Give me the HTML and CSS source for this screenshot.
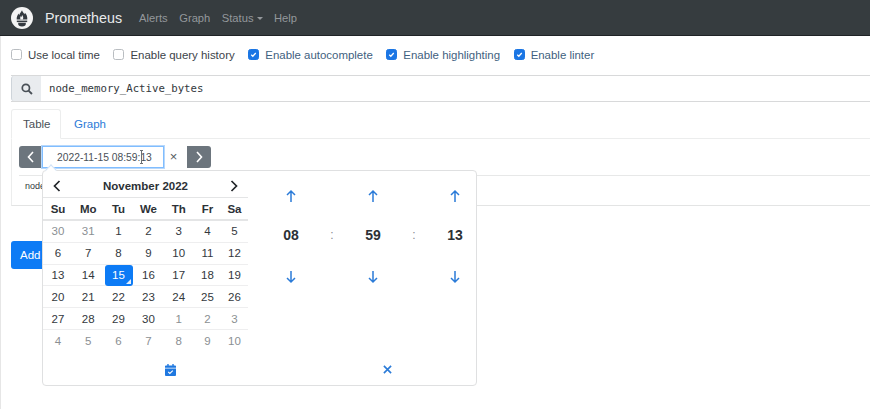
FILE: index.html
```html
<!DOCTYPE html>
<html lang="en">
<head>
<meta charset="utf-8">
<title>Prometheus</title>
<link rel="stylesheet" href="styles.css">
</head>
<body>
<nav class="navbar">
  <svg class="logo" viewBox="0 0 22 22" aria-hidden="true">
    <circle cx="11" cy="11" r="11" fill="#f4f4f4"/>
    <path d="M11 3.2c.5 2 2 2.6 2.2 4 .5-.4.7-1 .7-1.5 1.6 1.700 2.600 3.700 2.400 6.800H5.700c-.2-2.500.7-4.300 2-6 0 .7.200 1.200.7 1.500C8.500 6 10.300 5.200 11 3.200z" fill="#343a40"/>
    <path d="M9.500 12.600c-.5-1.500-.3-2.500.4-3.500.1.600.3.900.6 1.100.1-1 .3-1.700.7-2.300.2.900.8 1.400 1 2.100.1.800 0 1.700-.3 2.600z" fill="#f4f4f4"/>
    <rect x="5.800" y="13.600" width="10.400" height="1.500" fill="#343a40"/>
    <path d="M7.200 15.800h7.600v1.200a3.800 2.400 0 0 1-7.600 0z" fill="#343a40"/>
  </svg>
  <span class="brand">Prometheus</span>
  <a class="nav-link">Alerts</a>
  <a class="nav-link">Graph</a>
  <a class="nav-link">Status<i class="caret"></i></a>
  <a class="nav-link">Help</a>
</nav>
<main class="page">
  <div class="options">
    <label class="opt"><i class="box"></i>Use local time</label>
    <label class="opt"><i class="box"></i>Enable query history</label>
    <label class="opt on"><i class="box"><svg viewBox="0 0 12 12"><path d="M3 6.300l2.100 2L9 4" fill="none" stroke="#fff" stroke-width="1.700"/></svg></i>Enable autocomplete</label>
    <label class="opt on"><i class="box"><svg viewBox="0 0 12 12"><path d="M3 6.300l2.100 2L9 4" fill="none" stroke="#fff" stroke-width="1.700"/></svg></i>Enable highlighting</label>
    <label class="opt on"><i class="box"><svg viewBox="0 0 12 12"><path d="M3 6.300l2.100 2L9 4" fill="none" stroke="#fff" stroke-width="1.700"/></svg></i>Enable linter</label>
  </div>
  <div class="query">
    <span class="addon">
      <svg viewBox="0 0 14 14" class="search"><circle cx="5.700" cy="5.700" r="4.200" fill="none" stroke="#495057" stroke-width="2"/><path d="M8.800 8.800l4 4" stroke="#495057" stroke-width="2.200"/></svg>
    </span>
    <span class="expr">node_memory_Active_bytes</span>
  </div>
  <div class="tabs">
    <span class="tab active">Table</span>
    <span class="tab">Graph</span>
  </div>
  <section class="panel">
    <div class="controls">
      <button class="step"><svg viewBox="0 0 10 14"><path d="M7 2L2.500 7 7 12" fill="none" stroke="#fff" stroke-width="1.600"/></svg></button>
      <span class="time-input">2022-11-15 08:59:13<svg class="ibeam" viewBox="0 0 5 14"><path d="M1 .5h3M2.500.5v13M1 13.500h3" fill="none" stroke="#6b7075" stroke-width="1"/></svg></span>
      <span class="clear">×</span>
      <button class="step"><svg viewBox="0 0 10 14"><path d="M3 2l4.500 5L3 12" fill="none" stroke="#fff" stroke-width="1.600"/></svg></button>
    </div>
    <div class="result">node</div>
  </section>
  <button class="add">Add</button>

  <div class="picker">
    <i class="pointer"></i>
    <div class="calendar">
      <div class="month">
        <svg viewBox="0 0 10 14"><path d="M7.500 2L2.500 7l5 5" fill="none" stroke="#212529" stroke-width="1.700"/></svg>
        <b>November 2022</b>
        <svg viewBox="0 0 10 14"><path d="M2.500 2l5 5-5 5" fill="none" stroke="#212529" stroke-width="1.700"/></svg>
      </div>
      <div class="week head"><b>Su</b><b>Mo</b><b>Tu</b><b>We</b><b>Th</b><b>Fr</b><b>Sa</b></div>
      <div class="week"><span class="off">30</span><span class="off">31</span><span>1</span><span>2</span><span>3</span><span>4</span><span>5</span></div>
      <div class="week"><span>6</span><span>7</span><span>8</span><span>9</span><span>10</span><span>11</span><span>12</span></div>
      <div class="week"><span>13</span><span>14</span><span class="today">15</span><span>16</span><span>17</span><span>18</span><span>19</span></div>
      <div class="week"><span>20</span><span>21</span><span>22</span><span>23</span><span>24</span><span>25</span><span>26</span></div>
      <div class="week"><span>27</span><span>28</span><span>29</span><span>30</span><span class="off">1</span><span class="off">2</span><span class="off">3</span></div>
      <div class="week last"><span class="off">4</span><span class="off">5</span><span class="off">6</span><span class="off">7</span><span class="off">8</span><span class="off">9</span><span class="off">10</span></div>
    </div>
    <div class="clock">
      <div class="hand">
        <svg viewBox="0 0 12 14"><path d="M6 13V2M2 6l4-4 4 4" fill="none" stroke="#2b7bd8" stroke-width="1.500"/></svg>
        <b>08</b>
        <svg viewBox="0 0 12 14"><path d="M6 1v11M2 8l4 4 4-4" fill="none" stroke="#2b7bd8" stroke-width="1.500"/></svg>
      </div>
      <span class="sep">:</span>
      <div class="hand">
        <svg viewBox="0 0 12 14"><path d="M6 13V2M2 6l4-4 4 4" fill="none" stroke="#2b7bd8" stroke-width="1.500"/></svg>
        <b>59</b>
        <svg viewBox="0 0 12 14"><path d="M6 1v11M2 8l4 4 4-4" fill="none" stroke="#2b7bd8" stroke-width="1.500"/></svg>
      </div>
      <span class="sep">:</span>
      <div class="hand">
        <svg viewBox="0 0 12 14"><path d="M6 13V2M2 6l4-4 4 4" fill="none" stroke="#2b7bd8" stroke-width="1.500"/></svg>
        <b>13</b>
        <svg viewBox="0 0 12 14"><path d="M6 1v11M2 8l4 4 4-4" fill="none" stroke="#2b7bd8" stroke-width="1.500"/></svg>
      </div>
    </div>
    <div class="foot">
      <span class="foot-cell"><svg viewBox="0 0 12 13" class="cal"><path d="M2.500 0h1.500v2H2.500zM8 0h1.500v2H8z" fill="#1f78e0"/><path d="M1 1.500h10a1 1 0 0 1 1 1V4H0V2.500a1 1 0 0 1 1-1zM0 4.800h12V12a1 1 0 0 1-1 1H1a1 1 0 0 1-1-1z" fill="#1f78e0"/><path d="M3.500 8.500l1.800 1.700 3.200-3" fill="none" stroke="#fff" stroke-width="1.200"/></svg></span>
      <span class="foot-cell"><svg viewBox="0 0 10 10" class="close"><path d="M1 1l8 8M9 1l-8 8" stroke="#2b7bd8" stroke-width="1.800"/></svg></span>
    </div>
  </div>
</main>
</body>
</html>
```
FILE: styles.css
```css
* { box-sizing: border-box; }
html, body { margin: 0; height: 100%; }
body {
  font-family: "Liberation Sans", Arial, sans-serif;
  font-size: 13px;
  color: #212529;
  background: #fff;
  overflow: hidden;
}
svg { display: block; }

.navbar {
  height: 36px;
  display: flex;
  align-items: center;
  padding-left: 11px;
  background: #363c3f;
  border-bottom: 1px solid #1f2326;
}
.logo { width: 22px; height: 22px; flex: none; }
.brand { margin-left: 12px; margin-right: 17px; font-size: 14.300px; color: #e8eaeb; }
.nav-link { margin-right: 11.500px; font-size: 11.200px; color: #94989c; }
.caret {
  display: inline-block;
  margin-left: 3px;
  vertical-align: 2px;
  border-top: 3px solid #94989c;
  border-left: 3px solid transparent;
  border-right: 3px solid transparent;
}

.page {
  position: relative;
  height: 373px;
  padding: 0 0 0 11px;
  border-left: 1px solid #e6e6e6;
}
.options {
  height: 39px;
  display: flex;
  align-items: center;
  gap: 13.600px;
  margin-left: -1px;
  padding-bottom: 2px;
}
.opt { display: flex; align-items: center; gap: 6px; font-size: 11.450px; color: #3c4349; }
.opt.on { color: #3f5f80; }
.box {
  width: 11px;
  height: 11px;
  border: 1px solid #b9bdc1;
  border-radius: 2.500px;
  background: #fff;
  flex: none;
}
.opt.on .box { background: #1b76e4; border-color: #1b76e4; }
.opt.on svg { width: 9px; height: 9px; }

.query {
  margin-left: -1px;
  height: 27px;
  display: flex;
  border-top: 1px solid #d8d9da;
  border-bottom: 1px solid #d8d9da;
}
.addon {
  width: 30px;
  background: #e9ecef;
  border: 1px solid #ced4da;
  border-width: 0 0 0 1px;
  border-radius: 3px 0 0 3px;
  display: flex;
  align-items: center;
  justify-content: center;
}
.search { width: 12px; height: 12px; }
.expr {
  padding-left: 8px;
  font-family: "DejaVu Sans Mono", monospace;
  font-size: 10.700px;
  line-height: 25px;
  color: #33383d;
}

.tabs {
  margin: 7px 0 0 -1px;
  height: 30px;
  display: flex;
  border-bottom: 1px solid #eceded;
}
.tab {
  padding: 0 13px;
  font-size: 11.500px;
  line-height: 30px;
  color: #2b7bd8;
  height: 30px;
}
.tab.active {
  width: 50px;
  padding: 0 11px;
  line-height: 29px;
  color: #495057;
  background: #fff;
  border: 1px solid #eceded;
  border-bottom-color: #fff;
  border-radius: 3px 3px 0 0;
}

.panel {
  margin-left: -1px;
  height: 67px;
  padding: 7px 0 0 8px;
  border-left: 1px solid #eceded;
  border-bottom: 1px solid #e3e4e4;
}
.controls {
  height: 30px;
  display: flex;
  align-items: flex-start;
  border-bottom: 1px solid #e7e8e8;
  margin-left: -1px;
}
.step {
  width: 24px;
  height: 22px;
  padding: 0;
  border: 0;
  background: #6c757d;
  display: flex;
  align-items: center;
  justify-content: center;
}
.controls .step:first-child { border-radius: 3px 0 0 3px; }
.controls .step:last-child { border-radius: 0 3px 3px 0; }
.step svg { width: 10px; height: 14px; }
.time-input {
  position: relative;
  width: 122px;
  height: 22px;
  margin-left: -1px;
  padding-left: 14px;
  font-size: 10.300px;
  line-height: 22px;
  color: #495057;
  background: #fff;
  border: 1px solid #80bdff;
  box-shadow: 0 0 0 1px #b8d8fb;
}
.ibeam {
  position: absolute;
  left: 96px;
  top: 3px;
  width: 5px;
  height: 14px;
}
.clear {
  width: 23px;
  padding-right: 4px;
  text-align: center;
  font-size: 13px;
  line-height: 22px;
  color: #555b61;
}
.result { padding: 5px 0 0 5px; font-size: 9px; color: #33383d; }

.add {
  display: block;
  margin: 35px 0 0 -1px;
  width: 80px;
  height: 28px;
  padding: 0 0 0 9px;
  text-align: left;
  font: 11.500px "Liberation Sans", Arial, sans-serif;
  color: #fff;
  background: #0d7bf5;
  border: 0;
  border-radius: 3px;
}

.picker {
  position: absolute;
  left: 41px;
  top: 134px;
  width: 435px;
  height: 216px;
  background: #fff;
  border: 1px solid #dfe0e1;
  border-radius: 4px;
  display: grid;
  grid-template-columns: 205px 1fr;
  grid-template-rows: 183px 1fr;
}
.pointer {
  position: absolute;
  left: 4px;
  top: -5px;
  width: 8px;
  height: 8px;
  background: #fff;
  border-left: 1px solid #cfe2f8;
  border-top: 1px solid #cfe2f8;
  transform: rotate(45deg);
}
.month {
  height: 27px;
  padding: 4px 9px 0 9px;
  display: flex;
  align-items: center;
  justify-content: space-between;
  font-size: 11.500px;
  color: #2c3136;
  border-bottom: 1px solid #e4e5e6;
}
.month svg { width: 10px; height: 14px; }
.week {
  display: grid;
  grid-template-columns: 30px 30.500px 30px 30px 30.500px 27px 27px;
  height: 21.800px;
  align-items: center;
  text-align: center;
  font-size: 11.500px;
  color: #33383d;
  border-bottom: 1px solid #eeeeef;
}
.week.head {
  height: 23px;
  border-bottom: 2px solid #e4e5e6;
  color: #2c3136;
}
.week.last { border-bottom: 0; }
.off { color: #8b8f93; }
.today {
  position: relative;
  height: 21px;
  margin: 0 1px;
  line-height: 21px;
  color: #fff;
  background: #0d7bf5;
  border-radius: 3px;
}
.today::after {
  content: "";
  position: absolute;
  right: 2px;
  bottom: 2px;
  border-left: 5px solid transparent;
  border-bottom: 5px solid #e4eefa;
}
.clock {
  display: flex;
  padding: 0 11px 0 33px;
}
.hand {
  width: 20px;
  flex: none;
  display: flex;
  flex-direction: column;
  align-items: center;
}
.hand svg { width: 12px; height: 14px; margin-top: 18px; }
.hand b {
  margin-top: 23px;
  font-size: 14px;
  line-height: 18px;
  color: #2c3136;
}
.hand svg:last-child { margin-top: 26px; }
.sep {
  flex: 1;
  text-align: center;
  margin-top: 57px;
  font-size: 12px;
  color: #888d91;
}
.foot {
  grid-column: 1 / 3;
  display: grid;
  grid-template-columns: 254px 180px;
  align-items: center;
}
.foot-cell { display: flex; justify-content: center; }
.cal { width: 11px; height: 12px; }
.close { width: 9px; height: 9px; }
```
